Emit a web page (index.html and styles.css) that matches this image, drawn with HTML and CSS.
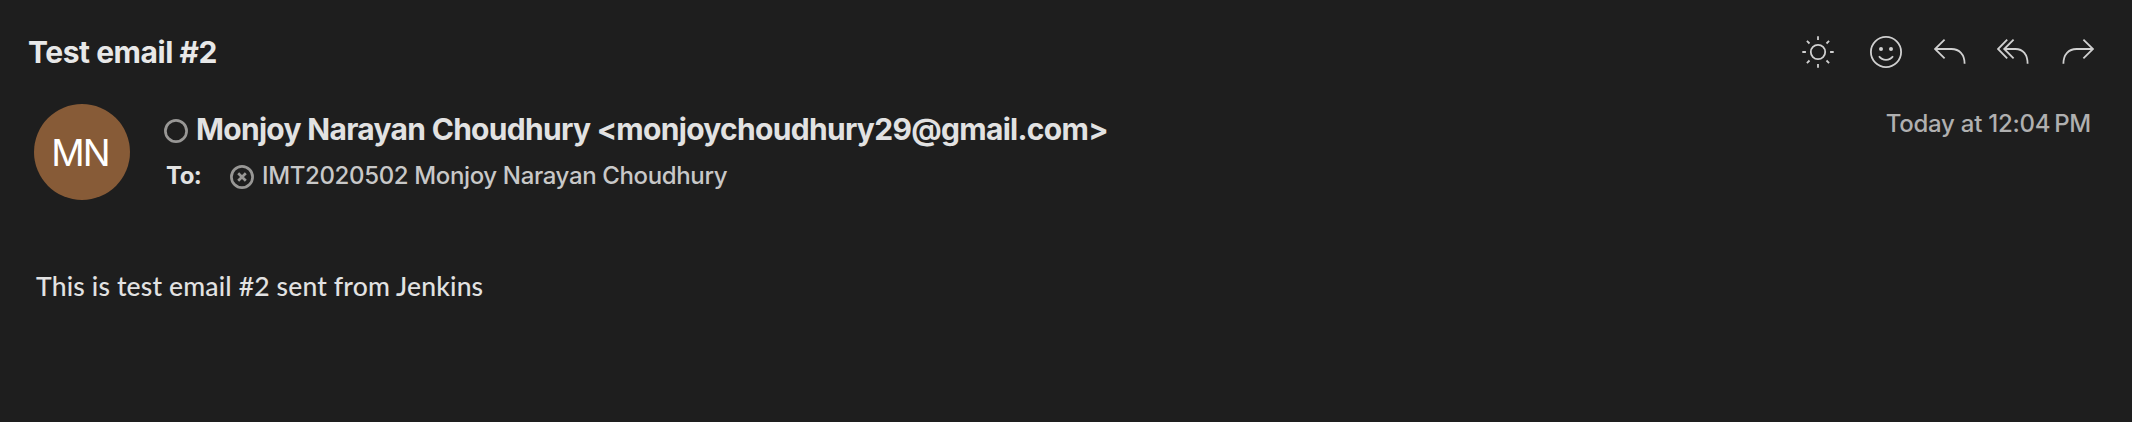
FILE: index.html
```html
<!DOCTYPE html>
<html lang="en">
<head>
<meta charset="utf-8">
<title>Test email #2</title>
<link rel="stylesheet" href="styles.css">
</head>
<body>
<article class="message">
  <header class="topbar">
    <h1 class="subject">Test email #2</h1>
    <nav class="actions">
      <svg class="icon icon-sun" viewBox="0 0 32 32"><circle cx="16" cy="16" r="7.2"/><path d="M16 .3v3.6M16 28.1v3.6M.3 16h3.6M28.1 16h3.6M4.9 4.9l2.6 2.6M24.5 24.5l2.6 2.6M4.9 27.1l2.6-2.6M24.5 7.5l2.6-2.6"/></svg>
      <svg class="icon icon-smile" viewBox="0 0 32 32"><circle cx="16" cy="16" r="15.1"/><circle class="eye" cx="11" cy="13" r="2"/><circle class="eye" cx="21" cy="13" r="2"/><path d="M9 20.3C12.3 25 19.7 25 23 20.3"/></svg>
      <svg class="icon icon-reply" viewBox="0 0 32 32"><path d="M10.6 3.6L1 13l9.6 9.4M1 13h16.5C25.3 13 30.6 18.5 30.6 27.7"/></svg>
      <svg class="icon icon-reply-all" viewBox="0 0 32 32"><path d="M10.2 3.6L1 13l9.2 9.4M16.6 3.6L7.2 13l9.4 9.4M7.2 13H18.5C26 13 30.6 18.5 30.6 27.7"/></svg>
      <svg class="icon icon-forward" viewBox="0 0 32 32"><path d="M21.4 3.6L31 13l-9.6 9.4M31 13H14.5C6.7 13 1.4 18.5 1.4 27.7"/></svg>
    </nav>
  </header>
  <section class="sender">
    <div class="avatar">MN</div>
    <div class="people">
      <div class="from">
        <svg class="status" viewBox="0 0 24 24"><circle cx="12" cy="12" r="10.6"/></svg>
        <span class="from-name">Monjoy Narayan Choudhury &lt;monjoychoudhury29@gmail.com&gt;</span>
      </div>
      <div class="to">
        <span class="to-label">To:</span>
        <svg class="status" viewBox="0 0 24 24"><circle cx="12" cy="12" r="10.6"/><path d="M8.2 8.2l7.6 7.6M15.8 8.2l-7.6 7.6"/></svg>
        <span class="to-name">IMT2020502 Monjoy Narayan Choudhury</span>
      </div>
    </div>
    <time class="date">Today at 12:04&#8239;PM</time>
  </section>
  <p class="body-text">This is test email #2 sent from Jenkins</p>
</article>
</body>
</html>
```
FILE: styles.css
```css
body {
  margin: 0;
  background: #1e1e1e;
  color: #e2e2e2;
  font-family: Inter, "Liberation Sans", sans-serif;
}

.message {
  box-sizing: border-box;
  height: 422px;
  padding: 34px 0 0;
  overflow: hidden;
}

.topbar {
  display: flex;
  justify-content: space-between;
  align-items: center;
  height: 36px;
  padding: 0 38px 0 28px;
}

.subject {
  margin: 0;
  font-size: 30px;
  line-height: 36px;
  font-weight: 700;
  letter-spacing: -0.45px;
  color: #e8e8e8;
}

.actions {
  display: flex;
  gap: 32px;
}

.icon {
  width: 32px;
  height: 32px;
  fill: none;
  stroke: #d0d0d0;
  stroke-width: 1.8;
}

.icon-sun {
  margin-right: 4px;
}

.icon-reply {
  margin-right: -1px;
}

.icon-reply-all {
  margin-right: 1px;
}

.icon .eye {
  fill: #d0d0d0;
  stroke: none;
}

.sender {
  display: flex;
  align-items: flex-start;
  height: 96px;
  margin-top: 34px;
  padding: 0 41px 0 34px;
}

.avatar {
  width: 96px;
  height: 96px;
  border-radius: 50%;
  background: #875b37;
  color: #fff;
  font-size: 37px;
  line-height: 98px;
  letter-spacing: -2px;
  text-indent: -4px;
  text-align: center;
}

.people {
  display: flex;
  flex-direction: column;
  gap: 15px;
  margin: 7px 0 0 34px;
}

.from,
.to {
  display: flex;
  align-items: center;
  white-space: nowrap;
}

.from {
  height: 36px;
}

.to {
  height: 28px;
  padding-left: 2px;
}

.status {
  width: 24px;
  height: 24px;
  margin-top: 4px;
  fill: none;
  stroke: #989795;
  stroke-width: 2.7;
}

.to .status {
  margin-top: 2px;
}

.from-name {
  margin-left: 8px;
  font-size: 30px;
  line-height: 36px;
  font-weight: 700;
  letter-spacing: -0.7px;
}

.to-label {
  width: 64px;
  font-size: 24px;
  line-height: 28px;
  font-weight: 700;
  letter-spacing: -0.5px;
}

.to-name {
  margin-left: 8px;
  font-size: 24px;
  line-height: 28px;
  font-weight: 500;
  letter-spacing: -0.36px;
  color: #c8c8c8;
}

.date {
  margin: 6px 0 0 auto;
  font-size: 24px;
  line-height: 28px;
  font-weight: 500;
  letter-spacing: -0.25px;
  color: #b0b0b0;
  white-space: nowrap;
}

.body-text {
  margin: 69px 0 0 36px;
  font-family: Lato, "Open Sans", sans-serif;
  font-size: 26.5px;
  font-weight: 500;
  letter-spacing: 0.16px;
  line-height: 34px;
}
```
